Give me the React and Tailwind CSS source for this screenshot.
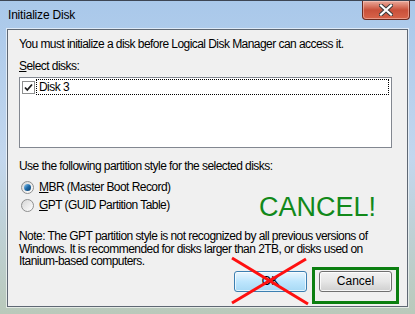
import React from 'react'

const font = { fontFamily: '"Liberation Sans", Arial, sans-serif' }

const CloseButton = () => (
  <div className="absolute top-0 right-[5px] w-[48px] h-[19px] rounded-b-[4px] border border-t-0 border-[#6b2a20] bg-gradient-to-b from-[#e9a99a] via-[#c9503a] to-[#d8644a] flex items-center justify-center shadow-[inset_0_0_0_1px_rgba(255,220,210,0.45)]">
    <svg width="14" height="12" viewBox="0 0 14 12">
      <path d="M2 1.5 L12 10.5 M12 1.5 L2 10.5" stroke="#3b3b3b" strokeWidth="4.2" strokeLinecap="square" />
      <path d="M2 1.5 L12 10.5 M12 1.5 L2 10.5" stroke="#ffffff" strokeWidth="2.2" strokeLinecap="square" />
    </svg>
  </div>
)

const Checkbox = () => (
  <div className="w-[13px] h-[13px] border border-[#8e8f8f] bg-white flex items-center justify-center">
    <svg width="9" height="9" viewBox="0 0 9 9">
      <path d="M1 4.5 L3.3 7 L8 1.5" fill="none" stroke="#1c1c1c" strokeWidth="1.8" />
    </svg>
  </div>
)

const Radio = ({ checked }) => (
  <div className="w-[13px] h-[13px] rounded-full border border-[#8e8f8f] bg-gradient-to-br from-[#d6d6d6] to-[#ffffff] flex items-center justify-center">
    {checked && (
      <div className="w-[7px] h-[7px] rounded-full bg-gradient-to-br from-[#8fd0f5] via-[#1e6aa8] to-[#0c3f6c]" />
    )}
  </div>
)

export default function App() {
  return (
    <div
      className="relative w-[415px] h-[314px] overflow-hidden bg-gradient-to-b from-[#a9c8ea] via-[#c3d7ee] to-[#b9c9ba] border-t border-[#3d4654]"
      style={font}
    >
      {/* title bar */}
      <div className="h-[28px] flex items-center pl-[8px] text-[12px] text-black tracking-[-0.2px]">
        Initialize Disk
      </div>
      <CloseButton />

      {/* dialog body */}
      <div className="mx-[7px] h-[278px] border border-[#5f6874] bg-[#f0f0f0] shadow-[0_0_0_1px_rgba(255,255,255,0.6)]">
        <div className="pl-[11px] pr-[15px] pt-[7px] text-[12px] leading-[15px] text-black tracking-[-0.55px]">
          <p>You must initialize a disk before Logical Disk Manager can access it.</p>
          <p className="mt-[7px]">
            <span className="underline">S</span>elect disks:
          </p>

          {/* disk list */}
          <div className="mt-[3px] h-[71px] border border-[#828790] bg-white pt-[1px] pl-[2px] pr-[2px]">
            <div className="flex items-center">
              <Checkbox />
              <div className="ml-[1px] flex-1 h-[16px] border border-dotted border-black flex items-center pl-[2px]">
                Disk 3
              </div>
            </div>
          </div>

          <p className="mt-[11px]">Use the following partition style for the selected disks:</p>

          <div className="mt-[6px] flex items-center gap-[5px] pl-[2px]">
            <Radio checked />
            <span>
              <span className="underline">M</span>BR (Master Boot Record)
            </span>
          </div>
          <div className="mt-[3px] flex items-center gap-[5px] pl-[2px]">
            <Radio />
            <span>
              <span className="underline">G</span>PT (GUID Partition Table)
            </span>
          </div>

          <p className="mt-[17px] leading-[12.5px]">
            Note: The GPT partition style is not recognized by all previous versions of
            <br />
            Windows. It is recommended for disks larger than 2TB, or disks used on
            <br />
            Itanium-based computers.
          </p>

          <div className="mt-[3px] flex justify-end gap-[12px] tracking-normal">
            <button className="w-[73px] h-[21px] rounded-[3px] border border-[#3c7fb1] bg-gradient-to-b from-[#eaf6fd] via-[#bee6fd] to-[#a7d9f5] text-[12px] shadow-[inset_0_0_0_1px_rgba(255,255,255,0.7)]">
              OK
            </button>
            <button className="w-[73px] h-[21px] rounded-[3px] border border-[#707070] bg-gradient-to-b from-[#f2f2f2] via-[#e6e6e6] to-[#cfcfcf] text-[12px] shadow-[inset_0_0_0_1px_rgba(255,255,255,0.8)]">
              Cancel
            </button>
          </div>
        </div>
      </div>

      {/* annotations */}
      <div className="absolute left-[259px] top-[189px] text-[27px] leading-[34px] text-[#12891a]">
        CANCEL!
      </div>
      <div className="absolute left-[312px] top-[266px] w-[87px] h-[37px] border-[3px] border-[#0b7f10]" />
      <svg className="absolute left-[228px] top-[254px]" width="84" height="52" viewBox="0 0 84 52">
        <path d="M4 3 L80 49 M78 4 L4 48" stroke="#ff1010" strokeWidth="3" />
      </svg>
    </div>
  )
}
